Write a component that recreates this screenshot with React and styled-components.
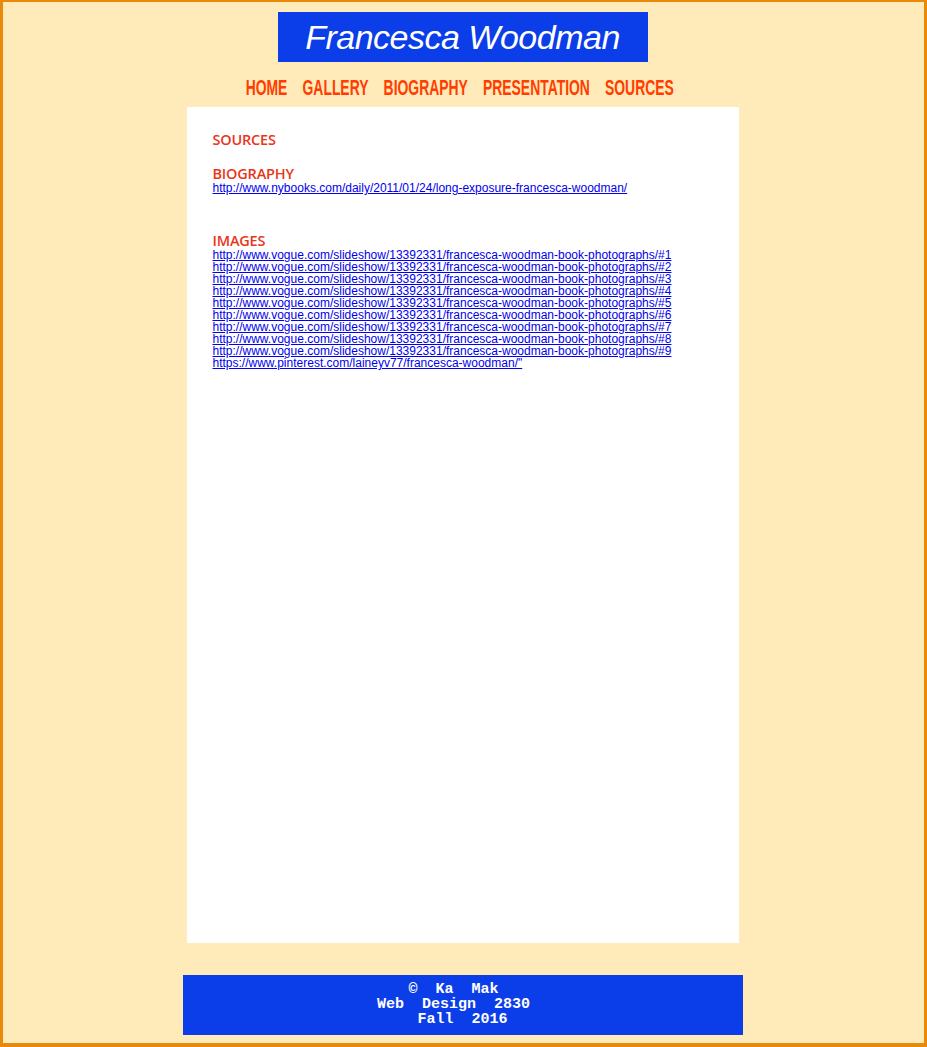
import React from "react";
import styled, { createGlobalStyle } from "styled-components";

const GlobalStyle = createGlobalStyle`
  html, body {
    margin: 0;
    padding: 0;
  }
  body {
    background: #ffebb9;
    font-family: "Liberation Sans", Arial, sans-serif;
  }
`;

const Page = styled.div`
  box-sizing: border-box;
  min-height: 100vh;
  border: 3px solid #e8890c;
  border-top-width: 2px;
  border-bottom-width: 4px;
  display: flex;
  flex-direction: column;
  align-items: center;
  padding-top: 10px;
  padding-right: 2px;
`;

const Title = styled.h1`
  margin: 0;
  width: 370px;
  height: 50px;
  box-sizing: border-box;
  background: #0b3de8;
  color: #ffffff;
  font-family: "Liberation Sans", Arial, sans-serif;
  font-style: italic;
  font-weight: normal;
  font-size: 34px;
  line-height: 50px;
  text-align: center;
  letter-spacing: -0.5px;
`;

/* condensed display face isn't available, so the row is squeezed horizontally */
const Nav = styled.nav`
  box-sizing: border-box;
  display: flex;
  gap: 24px;
  margin-top: 10px;
  margin-right: 6px;
  height: 35px;
  padding-bottom: 3px;
  align-items: center;
  transform: scaleX(0.632);
  transform-origin: center;
`;

const NavLink = styled.a`
  font-family: "Liberation Sans", Arial, sans-serif;
  font-weight: bold;
  font-size: 22px;
  color: #ff3d00;
  text-decoration: none;
  text-transform: uppercase;
  cursor: pointer;
`;

const Content = styled.main`
  box-sizing: border-box;
  width: 552px;
  height: 836px;
  background: #ffffff;
  padding: 25px 26px;
`;

const Heading = styled.h2`
  margin: 0;
  font-family: "Open Sans", "Noto Sans", sans-serif;
  font-weight: 600;
  font-size: 14.5px;
  line-height: 16px;
  letter-spacing: -0.2px;
  color: #e8361a;
  margin-top: ${(p) => p.$top || 0}px;
`;

const LinkList = styled.div`
  display: flex;
  flex-direction: column;
  align-items: flex-start;
`;

const Link = styled.a`
  font-family: "Liberation Sans", Arial, sans-serif;
  font-size: 12px;
  line-height: 12px;
  color: #0000ee;
  text-decoration: underline;
`;

const Footer = styled.footer`
  box-sizing: border-box;
  width: 560px;
  height: 60px;
  margin-top: 32px;
  background: #0b3de8;
  color: #ffffff;
  font-family: "Liberation Mono", "Courier New", monospace;
  font-weight: bold;
  font-size: 15px;
  line-height: 15px;
  text-align: center;
  padding-top: 7px;
  white-space: pre;
`;

const navItems = ["Home", "Gallery", "Biography", "Presentation", "Sources"];

const vogue = Array.from(
  { length: 9 },
  (_, i) =>
    `http://www.vogue.com/slideshow/13392331/francesca-woodman-book-photographs/#${i + 1}`
);

export default function App() {
  return (
    <>
      <GlobalStyle />
      <Page>
        <Title>Francesca Woodman</Title>
        <Nav>
          {navItems.map((item) => (
            <NavLink key={item}>{item}</NavLink>
          ))}
        </Nav>
        <Content>
          <Heading>SOURCES</Heading>
          <Heading $top={18}>BIOGRAPHY</Heading>
          <LinkList>
            <Link href="#">
              http://www.nybooks.com/daily/2011/01/24/long-exposure-francesca-woodman/
            </Link>
          </LinkList>
          <Heading $top={39}>IMAGES</Heading>
          <LinkList>
            {vogue.map((url) => (
              <Link key={url} href="#">
                {url}
              </Link>
            ))}
            <Link href="#">https://www.pinterest.com/laineyv77/francesca-woodman/"</Link>
          </LinkList>
        </Content>
        <Footer>
          {"©  Ka  Mak  \nWeb  Design  2830  \nFall  2016"}
        </Footer>
      </Page>
    </>
  );
}
